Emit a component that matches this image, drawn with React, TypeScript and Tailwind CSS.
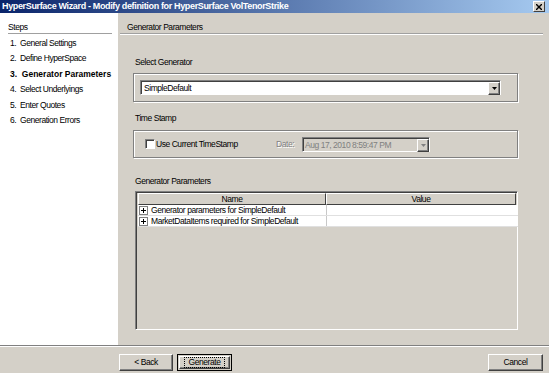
import React from "react";

const font = { fontFamily: '"Liberation Sans", Arial, sans-serif' };

function DropBtn({ disabled = false }: { disabled?: boolean }) {
  return (
    <div className="w-[12px] h-full bg-[#d4d0c8] border border-t-white border-l-white border-b-[#404040] border-r-[#404040] shadow-[inset_-1px_-1px_0_#808080] flex items-center justify-center">
      <svg width="5" height="3" viewBox="0 0 5 3">
        <path d="M0 0h5L2.5 3z" fill={disabled ? "#808080" : "#000"} />
      </svg>
    </div>
  );
}

function Plus() {
  return (
    <div className="w-[9px] h-[9px] border border-[#808080] bg-white flex items-center justify-center mr-[3px] shrink-0">
      <svg width="5" height="5" viewBox="0 0 5 5">
        <path d="M0 2.5h5M2.5 0v5" stroke="#000" strokeWidth="1" />
      </svg>
    </div>
  );
}

export default function App() {
  const steps = [
    "1.  General Settings",
    "2.  Define HyperSpace",
    "3.  Generator Parameters",
    "4.  Select Underlyings",
    "5.  Enter Quotes",
    "6.  Generation Errors",
  ];
  return (
    <div
      className="w-[549px] h-[373px] bg-[#d4d0c8] flex flex-col text-[8.5px] tracking-[-0.45px] text-black overflow-hidden"
      style={font}
    >
      {/* Title bar */}
      <div className="h-[13px] shrink-0 bg-[linear-gradient(to_right,#0a246a,#a6caf0)] flex items-center justify-between pl-[2px] pr-[4px]">
        <span className="text-white font-bold text-[9px] leading-[13px] whitespace-nowrap tracking-[-0.35px]">
          HyperSurface Wizard - Modify definition for HyperSurface VolTenorStrike
        </span>
        <div className="w-[12px] h-[11px] bg-[#d4d0c8] border border-t-white border-l-white border-b-[#404040] border-r-[#404040] flex items-center justify-center">
          <svg width="6" height="6" viewBox="0 0 6 6">
            <path d="M0 0L6 6M6 0L0 6" stroke="#000" strokeWidth="1.4" />
          </svg>
        </div>
      </div>

      {/* Main */}
      <div className="flex h-[332px] shrink-0">
        {/* Left panel */}
        <div className="w-[118px] bg-white flex flex-col">
          <div className="pl-[8px] pr-[6px]">
            <div className="pt-[9px] h-[21px] leading-[11px] border-b border-[#a0a0a0]">Steps</div>
          </div>
          <div className="mt-[2px] pl-[10px] flex flex-col">
            {steps.map((s, i) => (
              <div
                key={i}
                className={`h-[15.4px] leading-[15.4px] whitespace-pre ${i === 2 ? "font-bold tracking-normal" : ""}`}
              >
                {s}
              </div>
            ))}
          </div>
        </div>

        {/* Right panel */}
        <div className="flex-1 flex flex-col">
          <div className="pl-[2px] pr-[6px]">
            <div className="pt-[9px] h-[21px] leading-[11px] border-b border-[#a0a0a0] pl-[7px] shadow-[0_1px_0_#fff]">
              Generator Parameters
            </div>
          </div>

          <div className="pl-[15px] w-[400px] flex flex-col">
            <div className="mt-[23px] h-[11px] leading-[11px] pl-[2px]">Select Generator</div>
            <div className="mt-[5px] h-[29px] border border-[#808080] shadow-[inset_1px_1px_0_#fff,1px_1px_0_#fff] pt-[6px] pl-[6px]">
              <div className="w-[361px] h-[15px] bg-white border border-t-[#808080] border-l-[#808080] border-b-white border-r-white shadow-[inset_1px_1px_0_#404040] flex">
                <div className="flex-1 pl-[3px] leading-[13px] pt-[1px]">SimpleDefault</div>
                <div className="h-[13px] mt-[1px]"><DropBtn /></div>
              </div>
            </div>

            <div className="mt-[11px] h-[11px] leading-[11px] pl-[2px]">Time Stamp</div>
            <div className="mt-[6px] h-[28px] border border-[#808080] shadow-[inset_1px_1px_0_#fff,1px_1px_0_#fff] flex items-center pl-[11px]">
              <div className="w-[10px] h-[10px] bg-white border border-t-[#808080] border-l-[#808080] border-b-white border-r-white shadow-[inset_1px_1px_0_#404040] mr-[1px] mb-[1px]" />
              <span className="w-[120px]">Use Current TimeStamp</span>
              <span className="text-[#808080] [text-shadow:1px_1px_0_#fff] w-[26px]">Date:</span>
              <div className="w-[128px] h-[15px] mt-[1px] bg-[#d4d0c8] border border-t-[#808080] border-l-[#808080] border-b-white border-r-white shadow-[inset_1px_1px_0_#404040] flex">
                <div className="flex-1 pl-[2px] pt-[1px] leading-[13px] text-[#808080] whitespace-nowrap">
                  Aug 17, 2010 8:59:47 PM
                </div>
                <div className="h-[13px] mt-[1px]"><DropBtn disabled /></div>
              </div>
            </div>

            <div className="mt-[18px] h-[11px] leading-[11px] pl-[2px]">Generator Parameters</div>
            <div className="mt-[4px] ml-[2px] w-[383px] h-[139px] border border-t-[#808080] border-l-[#808080] border-b-white border-r-white shadow-[inset_1px_1px_0_#404040] p-[1px] pl-[2px] pt-[1px]">
              <div className="flex h-[12px] leading-[10px]">
                <div className="w-[189px] bg-[#d4d0c8] border border-t-white border-l-white border-b-[#404040] border-r-[#404040] text-center">
                  Name
                </div>
                <div className="w-[191px] bg-[#d4d0c8] border border-t-white border-l-white border-b-[#404040] border-r-[#404040] text-center">
                  Value
                </div>
              </div>
              {[
                "Generator parameters for SimpleDefault",
                "MarketDataItems required for SimpleDefault",
              ].map((r, i) => (
                <div key={i} className="flex h-[11px] bg-white border-b border-[#e0e0e0] w-[380px]">
                  <div className="w-[189px] border-r border-[#c8c8c8] flex items-center pl-[1px] leading-[10px] whitespace-nowrap">
                    <Plus />
                    {r}
                  </div>
                  <div className="flex-1" />
                </div>
              ))}
            </div>
          </div>
        </div>
      </div>

      {/* Bottom bar */}
      <div className="border-t border-[#808080] shadow-[inset_0_1px_0_#fff] flex-1 flex items-start pt-[8px]">
        <div className="ml-[119px] w-[54px] h-[17px] bg-[#d4d0c8] border border-t-white border-l-white border-b-[#404040] border-r-[#404040] shadow-[inset_-1px_-1px_0_#808080] flex items-center justify-center">
          &lt; Back
        </div>
        <div className="ml-[4px] w-[55px] h-[17px] bg-[#d4d0c8] border border-black p-[1px]">
          <div className="w-full h-full border border-t-white border-l-white border-b-[#404040] border-r-[#404040] shadow-[inset_-1px_-1px_0_#808080] flex items-center justify-center">
            <span className="outline outline-1 outline-dotted outline-black px-[4px] leading-[9px]">Generate</span>
          </div>
        </div>
        <div className="ml-auto mr-[6px] w-[55px] h-[17px] bg-[#d4d0c8] border border-t-white border-l-white border-b-[#404040] border-r-[#404040] shadow-[inset_-1px_-1px_0_#808080] flex items-center justify-center">
          Cancel
        </div>
      </div>
    </div>
  );
}
